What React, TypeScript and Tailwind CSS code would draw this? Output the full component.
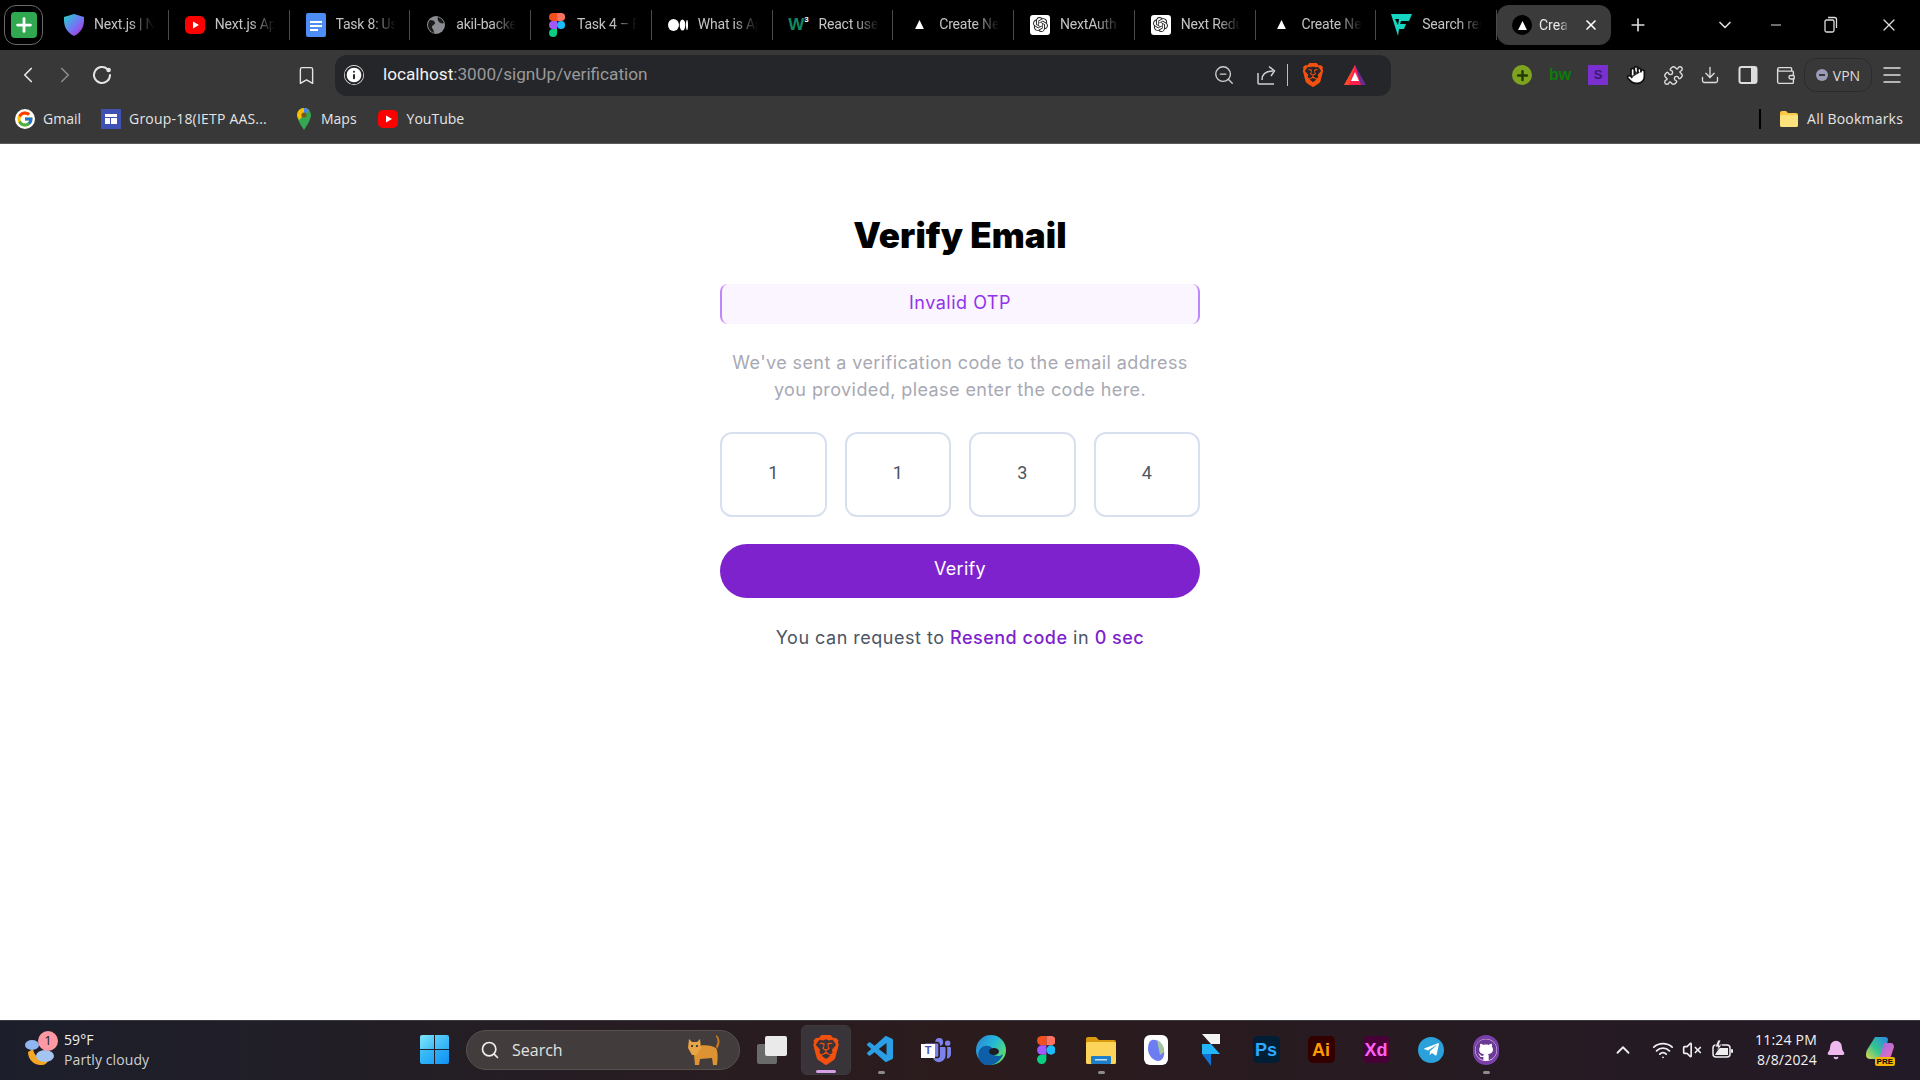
import React from "react";
import { ChevronLeft, ChevronRight, Bookmark, Info, ZoomOut, Plus, Minus, X, ChevronDown, Puzzle, Download, Wallet, Menu, Search, Wifi, VolumeX, Bell, ChevronUp, Hand } from "lucide-react";
import { FcGoogle } from "react-icons/fc";
import { FaTelegramPlane, FaGithub } from "react-icons/fa";
import { SiBrave, SiOpenai } from "react-icons/si";
import { VscVscode } from "react-icons/vsc";
import { BsMicrosoftTeams } from "react-icons/bs";

const YouTube = () => (
  <svg width="20" height="20" viewBox="0 0 20 20"><rect x="0" y="1" width="20" height="18" rx="5" fill="#f00" /><path d="M8 6.5 14 10 8 13.5z" fill="#fff" /></svg>
);
const Shield = () => (
  <svg width="22" height="24" viewBox="0 0 22 24">
    <defs><linearGradient id="sg" x1="0" y1="0" x2="1" y2="1"><stop offset="0" stopColor="#22d3c5" /><stop offset="0.5" stopColor="#6d7cf5" /><stop offset="1" stopColor="#c026d3" /></linearGradient></defs>
    <path d="M11 1 21 4c.5 9-2 15-10 19C3 19 .5 13 1 4z" fill="url(#sg)" />
  </svg>
);
const Docs = () => (
  <svg width="20" height="24" viewBox="0 0 20 24"><rect width="20" height="24" rx="2" fill="#4d8df6" /><path d="M4 8h12v2H4zM4 12h12v2H4zM4 16h8v2H4z" fill="#fff" /></svg>
);
const Globe = () => (
  <svg width="20" height="20" viewBox="0 0 20 20"><circle cx="10" cy="10" r="9" fill="#8a8d92" /><path d="M4 5c3 0 5 1 5 3s-3 2-3 4 2 2 2 6c-3-1-6-4-6-8 0-2 1-4 2-5zM12 2c3 1 5 3 6 6-2 1-4 0-5-1s-2-3-1-5z" fill="#1c1c1c" /></svg>
);
const Figma = ({ s = 24 }: { s?: number }) => (
  <svg width={s * 0.67} height={s} viewBox="0 0 16 24">
    <path d="M8 0H4a4 4 0 0 0 0 8h4z" fill="#f24e1e" /><path d="M8 0h4a4 4 0 0 1 0 8H8z" fill="#ff7262" />
    <path d="M8 8H4a4 4 0 0 0 0 8h4z" fill="#a259ff" /><circle cx="12" cy="12" r="4" fill="#1abcfe" />
    <path d="M8 16H4a4 4 0 1 0 4 4z" fill="#0acf83" />
  </svg>
);
const Medium = () => (
  <svg width="20" height="12" viewBox="0 0 20 12"><ellipse cx="5.5" cy="6" rx="5.5" ry="6" fill="#fff" /><ellipse cx="14.5" cy="6" rx="2.8" ry="5.6" fill="#fff" /><ellipse cx="19" cy="6" rx="1" ry="5" fill="#fff" /></svg>
);
const Tri = () => (
  <span className="flex h-5 w-5 items-center justify-center rounded-full bg-black"><svg width="11" height="11" viewBox="0 0 10 10"><path d="M5 1 9 9H1z" fill="#fff" /></svg></span>
);
const Oai = () => (
  <span className="flex h-5 w-5 items-center justify-center rounded-[3px] bg-white"><SiOpenai size={15} color="#222" /></span>
);
const WLogo = () => (
  <span className="flex items-start text-[17px] leading-none font-black text-[#0e8a62]" style={{ fontFamily: "'Liberation Sans', sans-serif" }}>W<span className="text-[8px] leading-[8px] text-white">3</span></span>
);
const Vee = () => (
  <svg width="22" height="24" viewBox="0 0 22 24"><path d="M0 1h21l-3 7h-8l-1 3h6l-2 5H8l-1 7z" fill="#15d6c3" /><path d="M4 6h4l-1 6z" fill="#000" /></svg>
);

const tabs: { icon: React.ReactNode; t: string }[] = [
  { icon: <Shield />, t: "Next.js | Next.js" },
  { icon: <YouTube />, t: "Next.js App Router" },
  { icon: <Docs />, t: "Task 8: User Auth" },
  { icon: <Globe />, t: "akil-backend" },
  { icon: <Figma />, t: "Task 4 – Figma" },
  { icon: <Medium />, t: "What is App Router" },
  { icon: <WLogo />, t: "React useForm" },
  { icon: <Tri />, t: "Create Next App" },
  { icon: <Oai />, t: "NextAuth" },
  { icon: <Oai />, t: "Next Redux" },
  { icon: <Tri />, t: "Create Next App" },
  { icon: <Vee />, t: "Search results" },
];

const Tab = ({ icon, t }: { icon: React.ReactNode; t: string }) => (
  <div className="flex h-[30px] w-[120.75px] shrink-0 items-center border-r border-[#4a4a4a] pb-[1px] pl-[14px]">
    <span className="flex w-6 shrink-0 justify-center">{icon}</span>
    <span className="ml-[8px] w-[60px] overflow-hidden whitespace-nowrap text-[14px] tracking-[-0.2px] text-[#c4c4c4] [mask-image:linear-gradient(to_right,black_60%,transparent)]" style={{ fontFamily: "Roboto, sans-serif" }}>{t}</span>
  </div>
);

const Slot = ({ w, children }: { w: string; children: React.ReactNode }) => (
  <div className={`flex shrink-0 items-center justify-center ${w}`}>{children}</div>
);

const Brave = ({ s = 24 }: { s?: number }) => <SiBrave size={s} color="#f1500f" />;

const BatTri = () => (
  <svg width="24" height="24" viewBox="0 0 24 24">
    <path d="M12 2 23 22H1z" fill="#662d91" /><path d="M12 2 1 22h11z" fill="#ff4724" /><path d="M12 2 6 22h12z" fill="#ff1f4f" /><path d="M12 9 16 18H8z" fill="#fff" />
  </svg>
);

const Folder = () => (
  <svg width="20" height="18" viewBox="0 0 20 18"><path d="M1 3a2 2 0 0 1 2-2h4l2 2h8a2 2 0 0 1 2 2v10a2 2 0 0 1-2 2H3a2 2 0 0 1-2-2z" fill="#fbc943" /><rect x="1" y="5" width="18" height="12" rx="2" fill="#fde27c" /></svg>
);

const Pin = () => (
  <svg width="14" height="22" viewBox="0 0 14 22"><path d="M7 0a7 7 0 0 1 7 7c0 5-7 15-7 15S0 12 0 7a7 7 0 0 1 7-7z" fill="#34a853" /><path d="M7 0a7 7 0 0 1 5 2L2 12C1 10 0 8 0 7a7 7 0 0 1 7-7z" fill="#fbbc04" /><path d="M7 0a7 7 0 0 1 5 2L9 5.5a3 3 0 0 0-2-.5z" fill="#4285f4" /><circle cx="7" cy="7" r="2.6" fill="#7a5a17" /></svg>
);

const Sites = () => (
  <span className="flex h-[20px] w-[20px] flex-col items-center justify-center gap-[1px] bg-[#3f51b5]">
    <span className="h-[3px] w-[12px] bg-white" />
    <span className="flex gap-[1px]"><span className="h-[6px] w-[5px] bg-white" /><span className="h-[6px] w-[6px] bg-white" /></span>
  </span>
);

const Sidebar = () => (
  <svg width="20" height="20" viewBox="0 0 20 20"><rect x="1.5" y="2" width="17" height="16" rx="2" fill="none" stroke="#ddd" strokeWidth="2" /><rect x="13" y="3" width="5" height="14" fill="#ddd" /></svg>
);

const Reload = () => (
  <svg width="22" height="22" viewBox="0 0 22 22" fill="none">
    <path d="M16.5 5.2A8 8 0 1 0 19 11" stroke="#e4e4e4" strokeWidth="2" strokeLinecap="round" />
    <circle cx="17.6" cy="6" r="2.3" fill="#e4e4e4" />
  </svg>
);

const ShareTray = () => (
  <svg width="22" height="22" viewBox="0 0 22 22" fill="none" stroke="#cfcfcf" strokeWidth="1.5">
    <path d="M2 9v10c0 .6.4 1 1 1h15" />
    <path d="M6 16c0-6 4-9 11-9" /><path d="M13 2.5 18.5 7 15 12" />
  </svg>
);

const Restore = () => (
  <svg width="16" height="20" viewBox="0 0 16 20" fill="none" stroke="#ddd" strokeWidth="1.3">
    <rect x="2" y="5" width="9" height="12" rx="1.5" /><path d="M5 2.5h6.5a2 2 0 0 1 2 2V13" />
  </svg>
);

const Battery = () => (
  <svg width="22" height="20" viewBox="0 0 22 20" fill="none">
    <rect x="1" y="5" width="17" height="12" rx="3" stroke="#eee" strokeWidth="1.5" />
    <rect x="19" y="9" width="2" height="4" rx="1" fill="#eee" />
    <path d="M3 15 7 8h9v7z" fill="#eee" />
    <path d="M6 0 3 7h3l-2 5 6-7H7l2-5z" fill="#eee" stroke="#241c24" strokeWidth="0.8" />
  </svg>
);

const Chrome = () => (
  <header className="shrink-0" style={{ fontFamily: "'Open Sans', sans-serif" }}>
    <div className="flex h-[50px] items-center bg-black">
      <div className="ml-[4px] flex h-[40px] w-[39px] shrink-0 items-center justify-center rounded-xl border border-[#6b6b6b]">
        <span className="flex h-[26px] w-[26px] items-center justify-center rounded-[4px] bg-[#2fa84f]"><Plus size={22} color="#fff" strokeWidth={3} /></span>
      </div>
      <div className="ml-[5px] flex">
        {tabs.map((tab, i) => <Tab key={i} icon={tab.icon} t={tab.t} />)}
      </div>
      <div className="flex h-[40px] w-[114px] shrink-0 items-center rounded-xl bg-[#3b3b3b] pl-[15px]">
        <Tri />
        <span className="ml-[7px] w-[30px] overflow-hidden whitespace-nowrap text-[14px] text-[#e8e8e8] [mask-image:linear-gradient(to_right,black_70%,transparent)]" style={{ fontFamily: "Roboto, sans-serif" }}>Create Next App</span>
        <X size={16} color="#fff" strokeWidth={2.5} className="ml-[14px]" />
      </div>
      <Plus size={20} color="#ddd" className="ml-[17px]" />
      <ChevronDown size={20} color="#ddd" className="ml-[67px]" />
      <Minus size={16} color="#ddd" strokeWidth={1.5} className="ml-[33px]" />
      <span className="ml-[39px] flex"><Restore /></span>
      <X size={20} color="#ddd" strokeWidth={1.5} className="ml-[40px]" />
    </div>

    <div className="flex h-[50px] items-center bg-[#383838]">
      <Slot w="w-9 ml-[10px]"><ChevronLeft size={26} color="#e4e4e4" strokeWidth={1.6} /></Slot>
      <Slot w="w-9 ml-[1px]"><ChevronRight size={26} color="#8a8a8a" strokeWidth={1.6} /></Slot>
      <Slot w="w-9 ml-[1px]"><Reload /></Slot>
      <Slot w="w-9 ml-[168px]"><Bookmark size={21} color="#e4e4e4" strokeWidth={1.6} /></Slot>
      <div className="ml-[11px] flex h-[41px] w-[1056px] shrink-0 items-center rounded-xl bg-[#25262a] pl-[9px] text-[17.2px]">
        <span className="flex h-[20px] w-[20px] items-center justify-center rounded-full bg-white"><Info size={20} color="#25262a" fill="#fff" strokeWidth={2.4} /></span>
        <span className="ml-[19px] whitespace-nowrap text-[#f2f2f2]" style={{ fontFamily: "Roboto, sans-serif" }}>localhost<span className="text-[#9a9a9a]">:3000/signUp/verification</span></span>
        <div className="ml-auto flex items-center">
          <ZoomOut size={22} color="#cfcfcf" strokeWidth={1.5} />
          <span className="ml-[21px] flex"><ShareTray /></span>
          <span className="ml-[9px] h-[22px] w-[1px] bg-[#bdbdbd]" />
          <span className="ml-[13px] flex"><Brave s={24} /></span>
          <span className="ml-[18px] mr-[24px] flex"><BatTri /></span>
        </div>
      </div>
      <div className="ml-[112px] flex">
        <Slot w="w-[38px]"><span className="flex h-[20px] w-[20px] items-center justify-center rounded-full bg-[#7da31f]"><Plus size={15} color="#243a07" strokeWidth={4} /></span></Slot>
        <Slot w="w-[38px]"><span className="text-[16px] font-bold text-[#0a7d0a]" style={{ fontFamily: "'Liberation Sans', sans-serif" }}>bw</span></Slot>
        <Slot w="w-[38px]"><span className="flex h-[20px] w-[20px] items-center justify-center bg-[#7a2fd0] text-[13px] font-bold text-[#3a1a70]" style={{ fontFamily: "'Liberation Sans', sans-serif" }}>S</span></Slot>
        <Slot w="w-[38px]"><Hand size={20} color="#111" fill="#fff" strokeWidth={2} /></Slot>
        <Slot w="w-[36px]"><Puzzle size={21} color="#ddd" strokeWidth={1.6} /></Slot>
        <Slot w="w-[38px]"><Download size={20} color="#ddd" strokeWidth={1.6} /></Slot>
        <Slot w="w-[37px]"><Sidebar /></Slot>
        <Slot w="w-[38px]"><Wallet size={21} color="#ddd" strokeWidth={1.6} /></Slot>
      </div>
      <div className="flex h-[34px] w-[68px] shrink-0 items-center justify-center gap-[5px] rounded-xl border border-[#2c2c2c] text-[14px] text-[#ddd]">
        <span className="flex h-[12px] w-[12px] items-center justify-center rounded-full bg-[#9a9bb5]"><span className="h-[2px] w-[6px] bg-[#383838]" /></span>VPN
      </div>
      <Slot w="w-[40px]"><Menu size={24} color="#ddd" strokeWidth={1.5} /></Slot>
    </div>

    <div className="flex h-[44px] items-center border-b border-[#5a5a5a] bg-[#383838] pb-[6px] text-[14px] text-[#e4e4e4]">
      <span className="ml-[15px] flex h-[20px] w-[20px] items-center justify-center rounded-full bg-white"><FcGoogle size={18} /></span>
      <span className="ml-[8px]">Gmail</span>
      <span className="ml-[20px] flex"><Sites /></span>
      <span className="ml-[8px] w-[143px] whitespace-nowrap tracking-[0.2px]">Group-18(IETP AAS...</span>
      <span className="ml-[25px] flex"><Pin /></span>
      <span className="ml-[10px]">Maps</span>
      <span className="ml-[21px] flex"><YouTube /></span>
      <span className="ml-[9px]">YouTube</span>
      <span className="ml-auto h-[20px] w-[2px] bg-black" />
      <span className="ml-[18px] flex"><Folder /></span>
      <span className="ml-[8px] mr-[17px] tracking-[0.2px]">All Bookmarks</span>
    </div>
  </header>
);

const Main = () => (
  <main className="mx-auto flex w-[480px] flex-1 flex-col items-center bg-white pt-[71px]" style={{ fontFamily: "Inter, sans-serif" }}>
    <h1 className="h-[40px] whitespace-nowrap text-[35px] leading-[40px] font-black tracking-[0.1px] text-black">Verify Email</h1>
    <div className="mt-[29px] flex h-[40px] w-full items-center justify-center rounded-lg border-x-2 border-[#c084fc] bg-[#faf5ff] pb-[3px] text-[18px] tracking-[0.5px] text-[#9333ea]">Invalid OTP</div>
    <p className="mt-[25px] whitespace-nowrap text-center text-[18px] leading-[27px] tracking-[0.42px] text-[#a8a9b4]">
      We've sent a verification code to the email address<br />you provided, please enter the code here.
    </p>
    <div className="mt-[29px] flex w-full justify-between" style={{ fontFamily: "Roboto, sans-serif" }}>
      {["1", "1", "3", "4"].map((d, i) => (
        <div key={i} className="flex h-[85px] w-[106.5px] items-center justify-center rounded-xl border-2 border-[#d8e0ef] pb-[4px] text-[18px] text-[#4b5563]">{d}</div>
      ))}
    </div>
    <button className="mt-[27px] flex h-[54px] w-full items-center justify-center rounded-full bg-[#7e22ce] pb-[5px] text-[18px] tracking-[0.3px] text-white">Verify</button>
    <p className="mt-[26px] whitespace-nowrap text-[18px] leading-[27px] tracking-[0.5px] text-[#4b5563]">
      You can request to <span className="font-medium text-[#7e22ce]">Resend code</span> in <span className="font-medium text-[#7e22ce]">0 sec</span>
    </p>
  </main>
);

const Weather = () => (
  <svg width="34" height="36" viewBox="0 0 34 36">
    <path d="M4 20c0 8 7 14 14 13 3 0 5-2 6-4-8 0-14-5-15-12z" fill="#f5a623" />
    <ellipse cx="8" cy="13" rx="7" ry="5" fill="#8fb6ee" />
    <ellipse cx="21" cy="24" rx="9" ry="6" fill="#a4c4f2" />
  </svg>
);

const Cat = () => (
  <svg width="36" height="34" viewBox="0 0 36 34">
    <path d="M30 2c5 3 4 10 1 14l-1-3c2-3 2-7 0-9z" fill="#c87a1e" />
    <path d="M10 14c6-3 16-2 20 1 2 4 2 9 1 17h-4l-1-7-12 1-1 6H9l-1-10z" fill="#dd9333" />
    <path d="M3 6l3 3h5l3-3 1 9-4 7H6L2 15z" fill="#e8a445" />
    <circle cx="6" cy="13" r="1" fill="#123" /><circle cx="11" cy="13" r="1" fill="#123" />
  </svg>
);

const Tile = ({ bg, fg, t }: { bg: string; fg: string; t: string }) => (
  <span className={`flex h-[27px] w-[27px] items-center justify-center rounded-[5px] text-[18px] leading-none font-bold ${bg} ${fg}`} style={{ fontFamily: "'Liberation Sans', sans-serif" }}>{t}</span>
);

const Edge = () => (
  <svg width="30" height="30" viewBox="0 0 30 30">
    <defs><linearGradient id="eg" x1="0" y1="0" x2="1" y2="0.6"><stop offset="0" stopColor="#2f7fd6" /><stop offset="0.55" stopColor="#23b9d8" /><stop offset="1" stopColor="#5ddb6c" /></linearGradient></defs>
    <circle cx="15" cy="15" r="15" fill="url(#eg)" />
    <path d="M9 30C2 27 0 18 5 13c3-3 9-3 11 0 2 3-1 5 2 7 3 2 7 1 9-1-2 7-10 13-18 11z" fill="#0f5ea8" />
    <ellipse cx="18" cy="16.5" rx="5" ry="3.5" fill="#1e1c22" />
  </svg>
);

const Files = () => (
  <svg width="30" height="28" viewBox="0 0 30 28">
    <path d="M0 3a2 2 0 0 1 2-2h8l3 3h15a2 2 0 0 1 2 2v3H0z" fill="#d99a10" />
    <rect y="6" width="30" height="22" rx="1.5" fill="#fcd45a" />
    <rect x="5" y="20" width="20" height="8" rx="1" fill="#1f7ec9" /><rect x="9" y="23" width="12" height="1.5" fill="#bde1f7" />
  </svg>
);

const AppIcon = () => (
  <span className="flex h-[30px] w-[24px] items-center justify-center rounded-[6px] bg-white">
    <svg width="18" height="24" viewBox="0 0 18 24"><path d="M5 2c5-1 11 3 12 10s-2 11-6 11S1 18 1 11c0-4 1-8 4-9z" fill="#6d7cf0" /><path d="M10 2c4 2 7 6 7 12l-4 3z" fill="#a5c4a0" /></svg>
  </span>
);

const Framer = () => (
  <svg width="22" height="34" viewBox="0 0 22 34">
    <path d="M2 1h18v10H11z" fill="#f3f3f3" /><path d="M2 11h9l9 10H2z" fill="#24b5f8" /><path d="M2 21h9v12z" fill="#0c74d6" />
  </svg>
);

const Ghost = () => (
  <span className="flex h-[30px] w-[26px] items-center justify-center rounded-full bg-[#7a3fa8]">
    <span className="flex h-[22px] w-[22px] items-center justify-center rounded-full bg-[#fff]"><FaGithub size={22} color="#6b3a96" /></span>
  </span>
);

const Teams = () => (
  <span className="relative flex h-[28px] w-[30px] items-end justify-end">
    <BsMicrosoftTeams size={26} color="#7b83eb" />
    <span className="absolute top-[8px] left-0 flex h-[14px] w-[14px] items-center justify-center bg-white text-[11px] leading-none font-bold text-[#4b53bc]" style={{ fontFamily: "'Liberation Sans', sans-serif" }}>T</span>
  </span>
);

const apps: { n: React.ReactNode; dot?: boolean; active?: boolean }[] = [
  { n: <Brave s={30} />, active: true },
  { n: <VscVscode size={32} color="#2a9fe6" />, dot: true },
  { n: <Teams /> },
  { n: <Edge /> },
  { n: <Figma s={28} /> },
  { n: <Files />, dot: true },
  { n: <AppIcon /> },
  { n: <Framer /> },
  { n: <Tile bg="bg-[#001e36]" fg="text-[#31a8ff]" t="Ps" /> },
  { n: <Tile bg="bg-[#330000]" fg="text-[#ff9a00]" t="Ai" /> },
  { n: <Tile bg="bg-[#470137]" fg="text-[#ff61f6]" t="Xd" /> },
  { n: <span className="flex h-[26px] w-[26px] items-center justify-center rounded-full bg-[#2aa1da]"><FaTelegramPlane size={17} color="#fff" /></span> },
  { n: <Ghost />, dot: true },
];

const Taskbar = () => (
  <footer className="flex h-[60px] shrink-0 items-center border-t border-[#3a3a40] bg-gradient-to-r from-[#1c1f2b] via-[#2b1b1d] to-[#221a26] pb-[2px] text-white" style={{ fontFamily: "'Open Sans', sans-serif" }}>
    <div className="relative ml-[24px] flex w-[40px] shrink-0">
      <Weather />
      <span className="absolute top-[-1px] left-[14px] flex h-[20px] w-[20px] items-center justify-center rounded-full bg-[#ff99a4] text-[13px] text-[#222]">1</span>
    </div>
    <div className="w-[100px] shrink-0 text-[14px] leading-[20px] tracking-[0.1px]">
      <div className="text-[#f2f2f2]">59°F</div>
      <div className="whitespace-nowrap text-[#cfcfcf]">Partly cloudy</div>
    </div>
    <div className="ml-[256px] grid h-[29px] w-[29px] shrink-0 grid-cols-2 gap-[1px]">
      <span className="rounded-tl-[2px] bg-gradient-to-br from-[#7fe6fb] to-[#3cbcf5]" />
      <span className="rounded-tr-[2px] bg-gradient-to-br from-[#5ad0fa] to-[#29adf5]" />
      <span className="rounded-bl-[2px] bg-gradient-to-br from-[#3fc1f7] to-[#1ea4f5]" />
      <span className="rounded-br-[2px] bg-gradient-to-br from-[#2db0f7] to-[#1190f5]" />
    </div>
    <div className="ml-[17px] flex h-[40px] w-[274px] shrink-0 items-center rounded-full border border-[#57514f] bg-[#423c3c] pl-[13px] text-[16px] text-[#e2e2e2]">
      <Search size={20} color="#eee" strokeWidth={2} />
      <span className="ml-[12px]">Search</span>
      <span className="ml-auto mr-[17px] flex"><Cat /></span>
    </div>
    <div className="relative ml-[17px] h-[28px] w-[30px] shrink-0">
      <span className="absolute top-[8px] left-0 h-[20px] w-[20px] rounded-[2px] bg-[#6a6a6a]" />
      <span className="absolute top-0 left-[8px] h-[20px] w-[22px] rounded-[2px] bg-[#eaeaea]" />
    </div>
    <div className="ml-[14px] flex">
      {apps.map((a, i) => (
        <div key={i} className={`relative flex h-[50px] w-[50px] shrink-0 items-center justify-center rounded-md ${i > 0 ? "ml-[5px]" : ""} ${a.active ? "border border-[#3e3a3c] bg-[#38343a]" : ""}`}>
          {a.n}
          {a.active && <span className="absolute bottom-[1px] h-[3px] w-[20px] rounded-full bg-[#d7a0e6]" />}
          {a.dot && <span className="absolute bottom-[1px] h-[3px] w-[7px] rounded-full bg-[#8c8c8c]" />}
        </div>
      ))}
    </div>
    <ChevronUp size={22} color="#eee" className="ml-[101px]" />
    <Wifi size={22} color="#eee" className="ml-[18px]" />
    <VolumeX size={20} color="#eee" className="ml-[8px]" />
    <span className="ml-[10px] flex"><Battery /></span>
    <div className="ml-[16px] w-[67px] text-right text-[14px] leading-[20px] tracking-[0.2px] whitespace-nowrap text-[#f2f2f2]">
      <div>11:24 PM</div><div>8/8/2024</div>
    </div>
    <Bell size={20} color="#f0b9ee" fill="#f0b9ee" className="ml-[9px]" />
    <div className="relative ml-[19px] h-[30px] w-[30px]">
      <svg width="30" height="26" viewBox="0 0 30 26">
        <defs>
          <linearGradient id="cg" x1="0" y1="1" x2="1" y2="0"><stop offset="0" stopColor="#e8d84b" /><stop offset="0.45" stopColor="#35c58f" /><stop offset="1" stopColor="#2a86e8" /></linearGradient>
          <linearGradient id="cp" x1="0" y1="0" x2="1" y2="1"><stop offset="0" stopColor="#9a6be8" /><stop offset="1" stopColor="#ee6fb5" /></linearGradient>
        </defs>
        <path d="M10 2h10c2 0 3 1 3 3l-5 19H5C1 24 0 20 2 15z" fill="url(#cg)" />
        <path d="M19 8h7c2 0 3 2 3 4l-3 9c-1 2-2 3-4 3h-8z" fill="url(#cp)" />
      </svg>
      <span className="absolute right-0 bottom-[-1px] rounded-[2px] bg-[#f7b500] px-[2px] text-[8px] leading-[9px] font-bold text-black" style={{ fontFamily: "'Liberation Sans', sans-serif" }}>PRE</span>
    </div>
  </footer>
);

export default function App() {
  return (
    <div className="flex h-screen w-full flex-col overflow-hidden bg-white">
      <Chrome />
      <Main />
      <Taskbar />
    </div>
  );
}
